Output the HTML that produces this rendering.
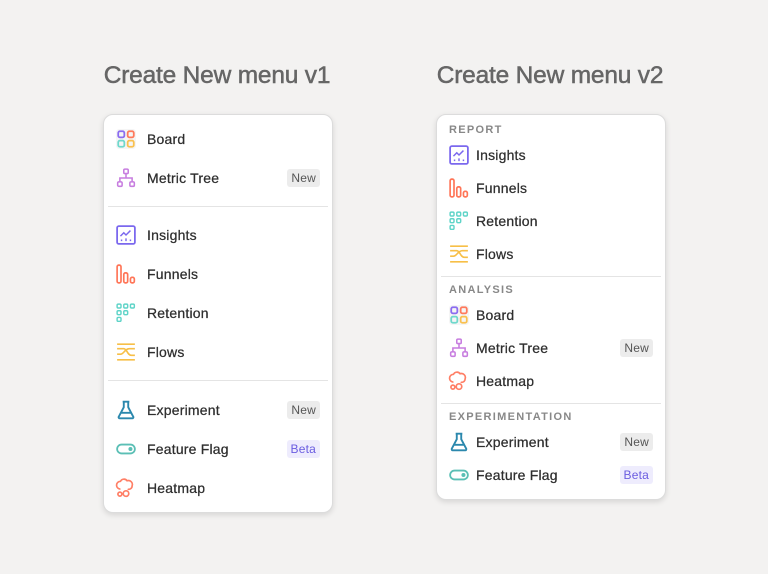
<!DOCTYPE html><html><head><meta charset="utf-8"><style>
*{margin:0;padding:0;box-sizing:border-box}
body{width:768px;height:574px;background:#f3f2f1;font-family:"Liberation Sans",sans-serif;position:relative;overflow:hidden}
.t{position:absolute;top:62px;font-size:24.5px;color:#666;-webkit-text-stroke:0.5px #666;letter-spacing:-0.2px;width:300px;text-align:center}
.card{position:absolute;background:#fff;border-radius:10px;border:1px solid #dcdcdc;box-shadow:0 2px 6px rgba(0,0,0,.12);width:230px}
.r{position:absolute;left:0;right:0;height:20px;display:flex;align-items:center;font-size:14px;color:#2e2e2e;letter-spacing:0.2px;-webkit-text-stroke:0.25px #2e2e2e}
.r svg{position:absolute;left:12px;top:0px;width:20px;height:20px;overflow:visible}
.r span.l{position:absolute}
.b{position:absolute;right:12px;font-size:12px;padding:2px 4px;border-radius:3px;background:#ececec;color:#555;-webkit-text-stroke:0}
.b.beta{background:#eeecfd;color:#6a5ce0}
.d{position:absolute;left:4px;right:4px;height:1px;background:#e4e4e4}
.h{position:absolute;left:12px;font-size:11px;letter-spacing:1.3px;color:#888;font-weight:bold}
</style></head><body>
<svg width="0" height="0" style="position:absolute"><defs>
<g id="board"><rect x="0" y="0" width="18" height="18" rx="3" fill="#f5f5f5"/><rect x="2" y="2" width="5.5" height="5.5" rx="1.5" fill="none" stroke="#8b6cf0" stroke-width="1.6"/><rect x="10.5" y="2" width="5.5" height="5.5" rx="1.5" fill="none" stroke="#ff7a5c" stroke-width="1.6"/><rect x="2" y="10.5" width="5.5" height="5.5" rx="1.5" fill="none" stroke="#6fd8cc" stroke-width="1.6"/><rect x="10.5" y="10.5" width="5.5" height="5.5" rx="1.5" fill="none" stroke="#f9c04f" stroke-width="1.6"/></g>
<g id="tree" fill="none" stroke="#c77ddf" stroke-width="1.4"><rect x="7" y="1" width="4" height="4" rx="1"/><rect x="1.5" y="12.5" width="4" height="4" rx="1"/><rect x="12.5" y="12.5" width="4" height="4" rx="1"/><path d="M9 5v4M3.5 12.5V9h11v3.5"/></g>
<g id="ins" fill="none" stroke="#7b68ee" stroke-width="1.6"><rect x="1" y="1" width="16" height="16" rx="1.5"/><path d="M4 10l3-3 2 2 4-4" stroke-width="1.3"/><path d="M5 13v1.5M9 12v2.5M13 13v1.5" stroke-width="1.3"/></g>
<g id="fun" fill="none" stroke="#ff7557" stroke-width="1.5"><rect x="1" y="1" width="3.5" height="16" rx="1.5"/><rect x="7" y="8" width="3.5" height="9" rx="1.5"/><rect x="13" y="12" width="3.5" height="5" rx="1.5"/></g>
<g id="ret" fill="none" stroke="#5fd4c8" stroke-width="1.3"><rect x="1" y="1" width="3.5" height="3.5" rx="1"/><rect x="7" y="1" width="3.5" height="3.5" rx="1"/><rect x="13" y="1" width="3.5" height="3.5" rx="1"/><rect x="1" y="7" width="3.5" height="3.5" rx="1"/><rect x="7" y="7" width="3.5" height="3.5" rx="1"/><rect x="1" y="13" width="3.5" height="3.5" rx="1"/></g>
<g id="flow" fill="none" stroke="#f7bf47" stroke-width="1.5"><path d="M1 2h16M1 16h16M1 6h6c3 0 3 6 7 6h3M1 11h3c3 0 4 -5 8 -5h5"/></g>
<g id="exp" fill="none" stroke="#2b88ad" stroke-width="1.7"><path d="M6 1.5h6M7 1.5v5L2.5 15a1 1 0 0 0 1 1.5h11a1 1 0 0 0 1-1.5L11 6.5v-5M4.5 11.5h9"/></g>
<g id="ff" fill="none" stroke="#5bbfb5" stroke-width="1.6"><rect x="1" y="5" width="16" height="8" rx="4"/><circle cx="13" cy="9" r="1.8" fill="#5bbfb5" stroke="none"/></g>
<g id="heat" fill="none" stroke="#ff7f66" stroke-width="1.5"><path d="M4 10a3.5 3.5 0 0 1 0-7a3.5 3.5 0 0 1 6 -0.5a3.5 3.5 0 0 1 4.5 4.5a3 3 0 0 1 -4 3"/><circle cx="3.5" cy="14.5" r="1.8"/><circle cx="9" cy="14" r="2.5"/></g>
</defs></svg>

<div class="t" style="left:67px">Create New menu v1</div>
<div class="t" style="left:400px">Create New menu v2</div>

<div class="card" style="left:103px;top:114px;height:399px">
<div class="r" style="top:14px"><svg viewBox="0 0 18 18"><use href="#board"/></svg><span class="l" style="left:43px">Board</span></div>
<div class="r" style="top:53px"><svg viewBox="0 0 18 18"><use href="#tree"/></svg><span class="l" style="left:43px">Metric Tree</span><span class="b">New</span></div>
<div class="d" style="top:91px"></div>
<div class="r" style="top:110px"><svg viewBox="0 0 18 18"><use href="#ins"/></svg><span class="l" style="left:43px">Insights</span></div>
<div class="r" style="top:149px"><svg viewBox="0 0 18 18"><use href="#fun"/></svg><span class="l" style="left:43px">Funnels</span></div>
<div class="r" style="top:188px"><svg viewBox="0 0 18 18"><use href="#ret"/></svg><span class="l" style="left:43px">Retention</span></div>
<div class="r" style="top:227px"><svg viewBox="0 0 18 18"><use href="#flow"/></svg><span class="l" style="left:43px">Flows</span></div>
<div class="d" style="top:265px"></div>
<div class="r" style="top:285px"><svg viewBox="0 0 18 18"><use href="#exp"/></svg><span class="l" style="left:43px">Experiment</span><span class="b">New</span></div>
<div class="r" style="top:324px"><svg viewBox="0 0 18 18"><use href="#ff"/></svg><span class="l" style="left:43px">Feature Flag</span><span class="b beta">Beta</span></div>
<div class="r" style="top:363px"><svg viewBox="0 0 18 18"><use href="#heat"/></svg><span class="l" style="left:43px">Heatmap</span></div>
</div>

<div class="card" style="left:436px;top:114px;height:386px">
<div class="h" style="top:9px">REPORT</div>
<div class="r" style="top:30px"><svg viewBox="0 0 18 18"><use href="#ins"/></svg><span class="l" style="left:39px">Insights</span></div>
<div class="r" style="top:63px"><svg viewBox="0 0 18 18"><use href="#fun"/></svg><span class="l" style="left:39px">Funnels</span></div>
<div class="r" style="top:96px"><svg viewBox="0 0 18 18"><use href="#ret"/></svg><span class="l" style="left:39px">Retention</span></div>
<div class="r" style="top:129px"><svg viewBox="0 0 18 18"><use href="#flow"/></svg><span class="l" style="left:39px">Flows</span></div>
<div class="d" style="top:161px"></div>
<div class="h" style="top:169px">ANALYSIS</div>
<div class="r" style="top:190px"><svg viewBox="0 0 18 18"><use href="#board"/></svg><span class="l" style="left:39px">Board</span></div>
<div class="r" style="top:223px"><svg viewBox="0 0 18 18"><use href="#tree"/></svg><span class="l" style="left:39px">Metric Tree</span><span class="b">New</span></div>
<div class="r" style="top:256px"><svg viewBox="0 0 18 18"><use href="#heat"/></svg><span class="l" style="left:39px">Heatmap</span></div>
<div class="d" style="top:288px"></div>
<div class="h" style="top:296px">EXPERIMENTATION</div>
<div class="r" style="top:317px"><svg viewBox="0 0 18 18"><use href="#exp"/></svg><span class="l" style="left:39px">Experiment</span><span class="b">New</span></div>
<div class="r" style="top:350px"><svg viewBox="0 0 18 18"><use href="#ff"/></svg><span class="l" style="left:39px">Feature Flag</span><span class="b beta">Beta</span></div>
</div>
</body></html>
